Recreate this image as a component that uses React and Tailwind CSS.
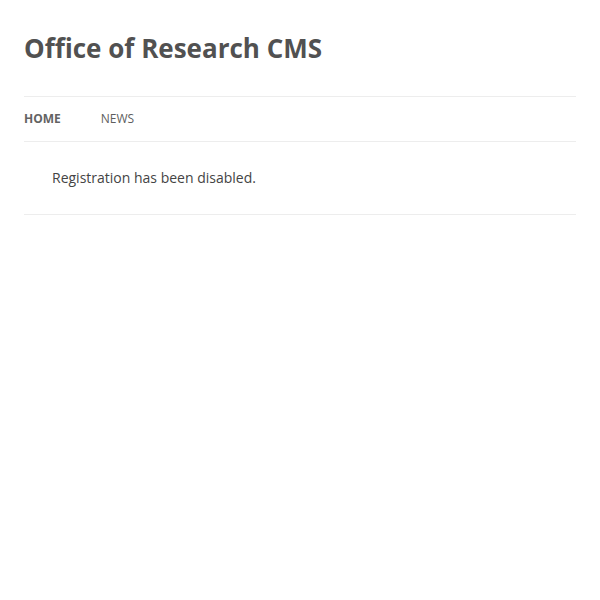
export default function App() {
  return (
    <div className="min-h-screen bg-white px-6 font-['Open_Sans',sans-serif] text-[#444444]">
      <header className="pt-6">
        <h1 className="py-1 text-[26px] leading-10 font-bold text-[#515151]">
          <a href="#home">Office of Research CMS</a>
        </h1>
        <nav aria-label="Main" className="mt-6 border-y border-[#ededed]">
          <ul className="flex gap-10 text-xs leading-11 uppercase">
            <li><a href="#home" aria-current="page" className="font-bold text-[#636363]">Home</a></li>
            <li><a href="#news" className="text-[#5e5e5e]">News</a></li>
          </ul>
        </nav>
      </header>
      <main className="px-7 pt-6 pb-6">
        <p className="text-sm leading-6">Registration has been disabled.</p>
      </main>
      <footer className="border-t border-[#ededed]" />
    </div>
  );
}
